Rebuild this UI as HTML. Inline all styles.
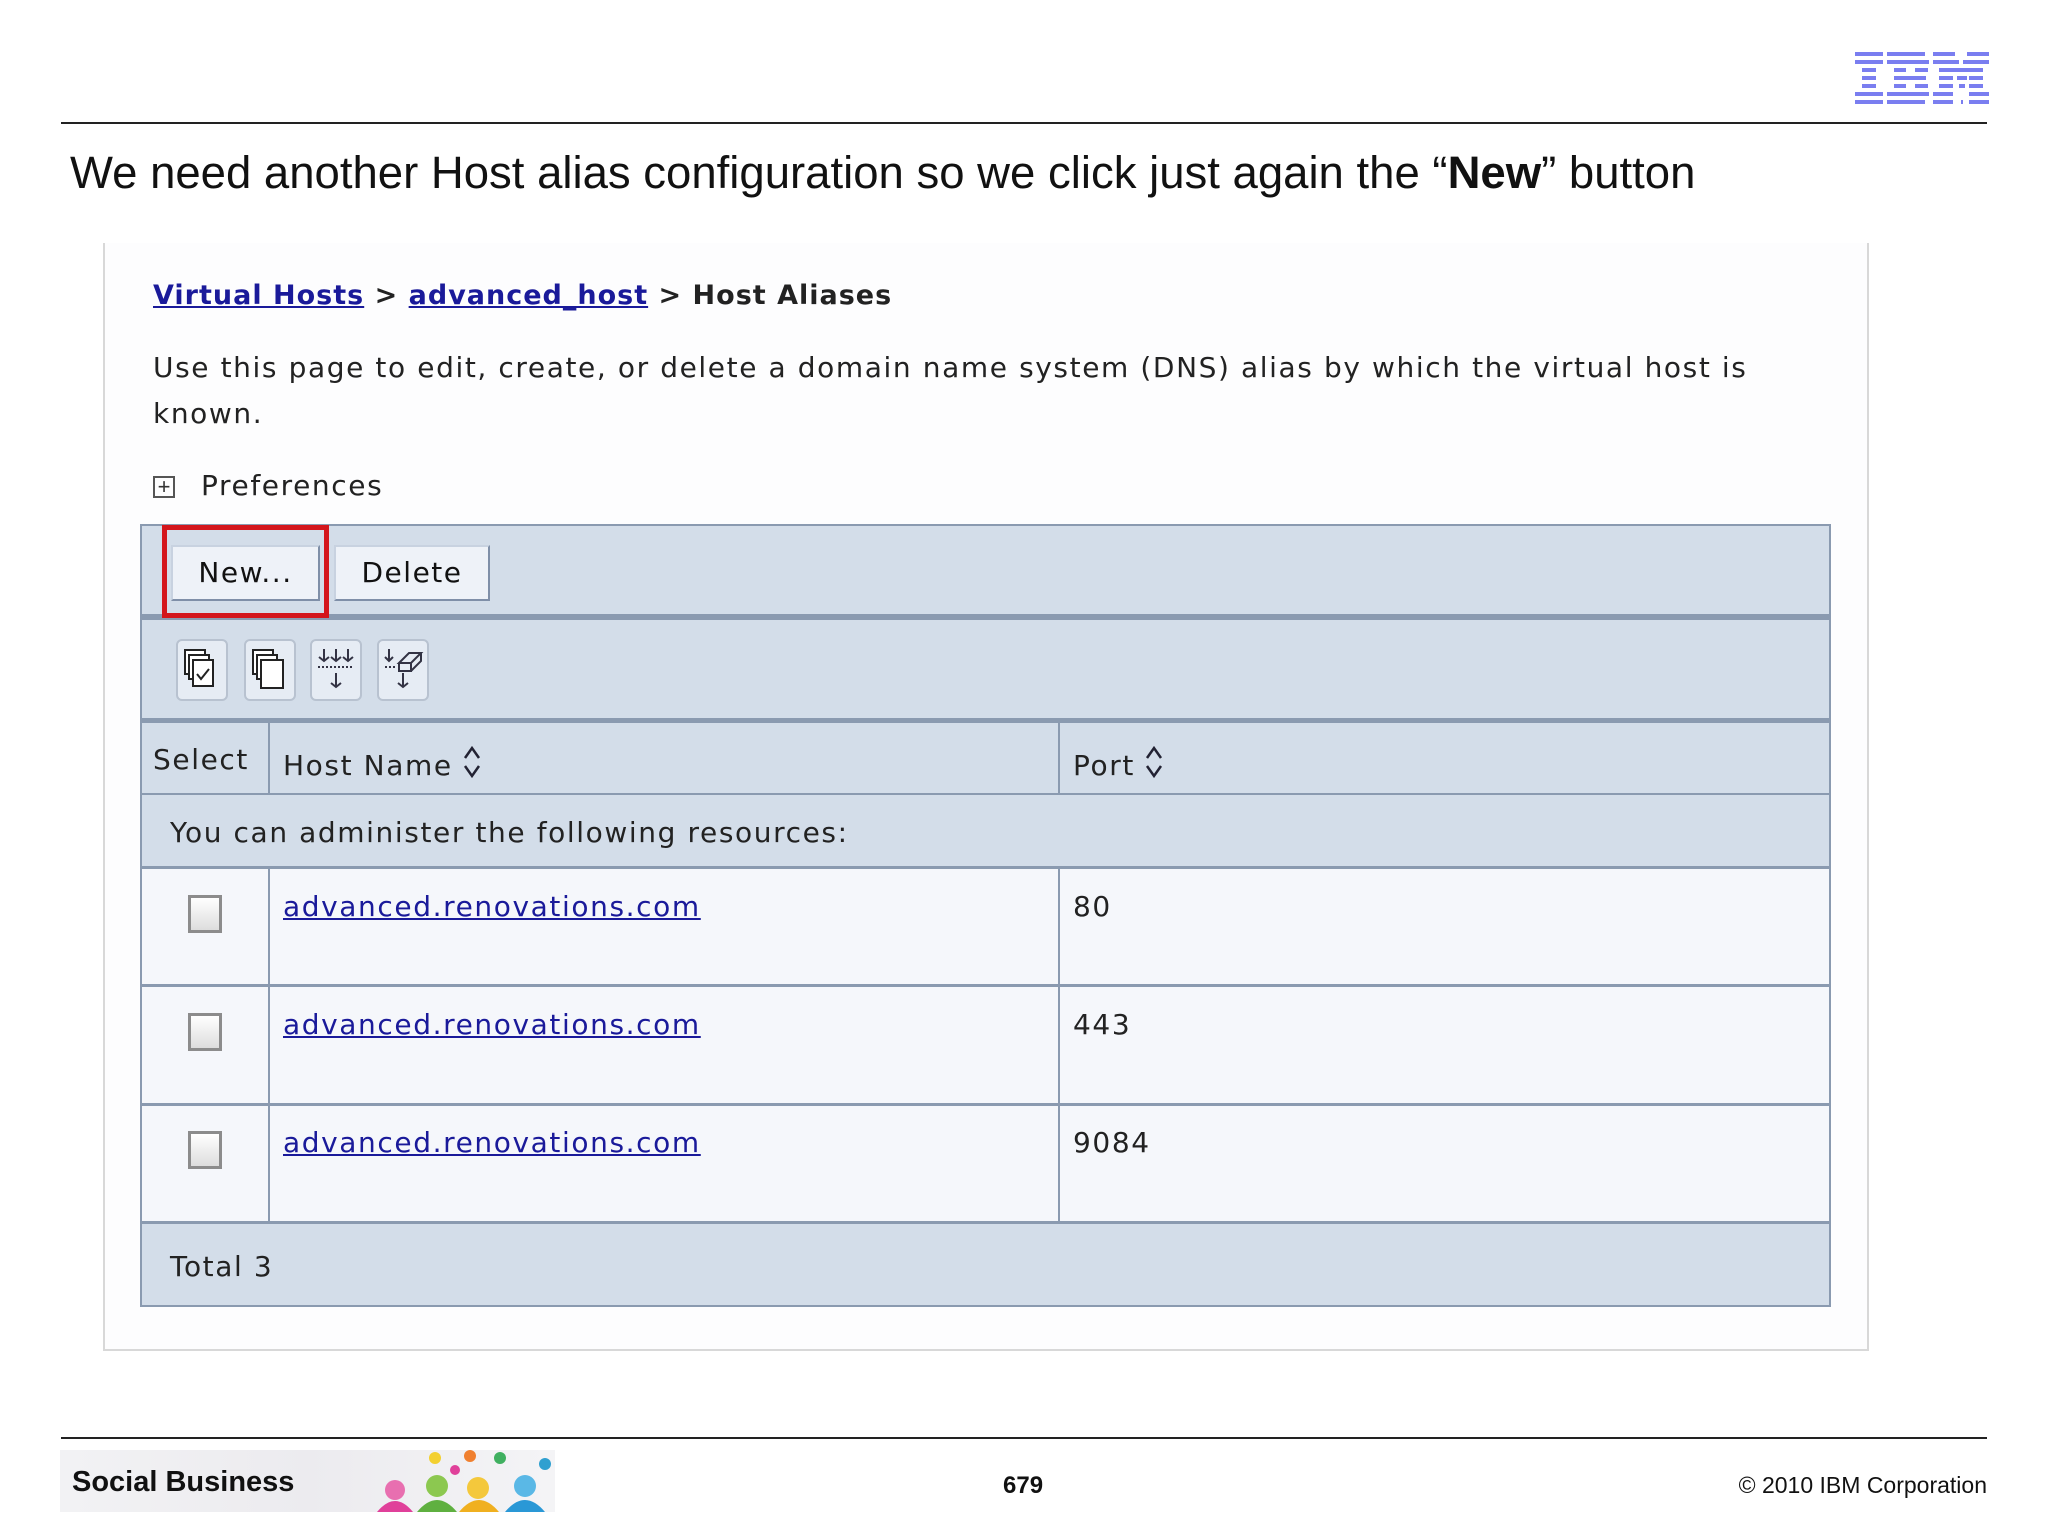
<!DOCTYPE html>
<html><head><meta charset="utf-8"><style>
*{margin:0;padding:0;box-sizing:border-box}
body{width:2048px;height:1536px;background:#fff;position:relative;overflow:hidden;font-family:"Liberation Sans",sans-serif}
.a{position:absolute;white-space:nowrap}
.s{font-family:"DejaVu Sans",sans-serif;font-size:28px;color:#222;letter-spacing:1.6px}
.lnk{color:#1a1a9a;text-decoration:underline}
.hl{position:absolute;left:140px;width:1691px;background:#8a9ab0}
.vl{position:absolute;width:2px;background:#8a9ab0}
.btn{position:absolute;top:545px;height:56px;background:#eef2f8;border:2px solid #7f8fa8;border-top-color:#c8d2e0;border-left-color:#c8d2e0;font-family:"DejaVu Sans",sans-serif;font-size:28px;letter-spacing:1.5px;text-align:center;line-height:52px;color:#111}
.ic{position:absolute;top:639px;width:52px;height:62px;border:2px solid #b8c2d0;border-radius:6px;background:#e6ecf4}
.cb{position:absolute;left:188px;width:34px;height:38px;border:3px solid #8c8c8c;background:linear-gradient(#fff,#ddd)}
.sort{display:inline-block;vertical-align:-6px;margin-left:8px}
</style></head><body>
<svg class="a" style="left:1855px;top:52px" width="134" height="52" viewBox="0 0 134 52">
<g fill="#7a7ef0">
<rect x="0" y="0" width="28" height="4"/><rect x="0" y="8" width="28" height="4"/><rect x="7" y="16" width="14" height="4"/><rect x="7" y="24" width="14" height="4"/><rect x="7" y="32" width="14" height="4"/><rect x="0" y="40" width="28" height="4"/><rect x="0" y="48" width="28" height="4"/>
<rect x="32" y="0" width="38" height="4"/><rect x="32" y="8" width="42" height="4"/><rect x="39" y="16" width="12" height="4"/><rect x="60" y="16" width="13" height="4"/><rect x="39" y="24" width="32" height="4"/><rect x="39" y="32" width="12" height="4"/><rect x="60" y="32" width="13" height="4"/><rect x="32" y="40" width="42" height="4"/><rect x="32" y="48" width="38" height="4"/>
<rect x="78" y="0" width="22" height="4"/><rect x="112" y="0" width="22" height="4"/><rect x="78" y="8" width="26" height="4"/><rect x="108" y="8" width="26" height="4"/><rect x="84" y="16" width="44" height="4"/><rect x="84" y="24" width="14" height="4"/><rect x="102" y="24" width="10" height="4"/><rect x="114" y="24" width="14" height="4"/><rect x="84" y="32" width="14" height="4"/><rect x="104" y="32" width="6" height="4"/><rect x="114" y="32" width="14" height="4"/><rect x="78" y="40" width="20" height="4"/><rect x="114" y="40" width="20" height="4"/><rect x="78" y="48" width="20" height="4"/><rect x="106" y="48" width="2" height="4"/><rect x="114" y="48" width="20" height="4"/>
</g></svg>
<div class="a" style="left:61px;top:122px;width:1926px;height:2px;background:#222"></div>
<div class="a" style="left:70px;top:147px;font-size:45.5px;color:#111">We need another Host alias configuration so we click just again the “<b>New</b>” button</div>

<div class="a" style="left:103px;top:243px;width:1766px;height:1108px;border:2px solid #d8d8d8;border-top:none;background:#fdfdfe"></div>
<div class="a s" style="left:153px;top:280px;font-weight:bold;font-size:27px;letter-spacing:1px"><span class="lnk">Virtual Hosts</span> &gt; <span class="lnk">advanced_host</span> &gt; Host Aliases</div>
<div class="a s" style="left:153px;top:351px">Use this page to edit, create, or delete a domain name system (DNS) alias by which the virtual host is</div>
<div class="a s" style="left:153px;top:397px">known.</div>
<div class="a" style="left:153px;top:476px;width:22px;height:22px;border:2px solid #555;text-align:center;line-height:17px;font-size:22px;color:#333">+</div>
<div class="a s" style="left:201px;top:469px">Preferences</div>

<div class="a" style="left:140px;top:524px;width:1691px;height:783px;background:#d3dde9;border:2px solid #8a9ab0"></div>
<div class="hl" style="top:614px;height:6px"></div>
<div class="hl" style="top:718px;height:5px"></div>
<div class="hl" style="top:793px;height:2px"></div>
<div class="a" style="left:142px;top:867px;width:1687px;height:355px;background:#f5f7fb"></div>
<div class="hl" style="top:866px;height:3px"></div>
<div class="hl" style="top:984px;height:3px"></div>
<div class="hl" style="top:1103px;height:3px"></div>
<div class="hl" style="top:1221px;height:3px"></div>
<div class="vl" style="left:268px;top:723px;height:71px"></div>
<div class="vl" style="left:268px;top:867px;height:355px"></div>
<div class="vl" style="left:1058px;top:723px;height:71px"></div>
<div class="vl" style="left:1058px;top:867px;height:355px"></div>

<div class="btn" style="left:171px;width:149px">New...</div>
<div class="btn" style="left:334px;width:156px">Delete</div>
<div class="a" style="left:162px;top:525px;width:167px;height:93px;border:5px solid #d4161c"></div>

<div class="ic" style="left:176px"><svg width="48" height="58"><g fill="#fff" stroke="#222" stroke-width="2"><rect x="7" y="9" width="20" height="24"/><rect x="11" y="14" width="20" height="24"/><rect x="15" y="19" width="20" height="26"/></g><path d="M19 33l4 5 8-10" fill="none" stroke="#222" stroke-width="2"/></svg></div>
<div class="ic" style="left:244px"><svg width="48" height="58"><g fill="#fff" stroke="#222" stroke-width="2"><rect x="7" y="9" width="20" height="24"/><rect x="11" y="14" width="20" height="24"/><rect x="15" y="19" width="22" height="28"/></g></svg></div>
<div class="ic" style="left:310px"><svg width="48" height="58"><g stroke="#334" stroke-width="2" fill="none"><path d="M12 8v12M7 16l5 4 5-4M24 8v12M19 16l5 4 5-4M36 8v12M31 16l5 4 5-4"/><path d="M6 26h36" stroke-dasharray="2 2"/><path d="M24 32v14M19 42l5 4 5-4"/></g></svg></div>
<div class="ic" style="left:377px"><svg width="48" height="58"><g stroke="#334" stroke-width="2" fill="none"><path d="M10 8v12M6 16l4 4 4-4"/><path d="M6 26h12" stroke-dasharray="2 2"/><path d="M20 22l10-10h12l-10 10zM20 22v8h12v-8M32 30l10-10v-8"/><path d="M24 32v14M19 42l5 4 5-4"/></g></svg></div>

<div class="a s" style="left:153px;top:743px">Select</div>
<div class="a s" style="left:283px;top:743px">Host Name<svg class="sort" width="22" height="38"><path d="M4 15l7-10 7 10M4 23l7 10 7-10" fill="none" stroke="#223" stroke-width="2.5"/></svg></div>
<div class="a s" style="left:1073px;top:743px">Port<svg class="sort" width="22" height="38"><path d="M4 15l7-10 7 10M4 23l7 10 7-10" fill="none" stroke="#223" stroke-width="2.5"/></svg></div>
<div class="a s" style="left:170px;top:816px">You can administer the following resources:</div>

<div class="cb" style="top:895px"></div>
<div class="cb" style="top:1013px"></div>
<div class="cb" style="top:1131px"></div>
<div class="a s lnk" style="left:283px;top:890px">advanced.renovations.com</div>
<div class="a s lnk" style="left:283px;top:1008px">advanced.renovations.com</div>
<div class="a s lnk" style="left:283px;top:1126px">advanced.renovations.com</div>
<div class="a s" style="left:1073px;top:890px">80</div>
<div class="a s" style="left:1073px;top:1008px">443</div>
<div class="a s" style="left:1073px;top:1126px">9084</div>
<div class="a s" style="left:170px;top:1250px">Total 3</div>

<div class="a" style="left:61px;top:1437px;width:1926px;height:2px;background:#222"></div>
<div class="a" style="left:60px;top:1450px;width:495px;height:62px;background:linear-gradient(90deg,#f2f2f4,#ecebef 50%,#f4f4f6)"></div>
<svg class="a" style="left:375px;top:1450px" width="180" height="62"><circle cx="20" cy="40" r="10" fill="#e86fb0"/><path d="M2 62q18-22 36 0z" fill="#e0409a"/><circle cx="62" cy="36" r="11" fill="#8cc850"/><path d="M42 62q20-24 40 0z" fill="#5fb040"/><circle cx="103" cy="38" r="11" fill="#f4c83c"/><path d="M84 62q20-24 40 0z" fill="#f0b020"/><circle cx="150" cy="36" r="11" fill="#5ab8e6"/><path d="M130 62q20-24 40 0z" fill="#2a98d6"/><circle cx="60" cy="8" r="6" fill="#f3d030"/><circle cx="95" cy="6" r="6" fill="#f08030"/><circle cx="125" cy="8" r="6" fill="#40b060"/><circle cx="170" cy="14" r="6" fill="#30a0d0"/><circle cx="80" cy="20" r="5" fill="#e0409a"/></svg>
<div class="a" style="left:72px;top:1466px;font-size:29px;font-weight:bold;color:#111">Social Business</div>
<div class="a" style="left:1003px;top:1472px;font-size:24px;font-weight:bold;color:#111">679</div>
<div class="a" style="right:61px;top:1472px;font-size:23px;color:#111">© 2010 IBM Corporation</div>
</body></html>
